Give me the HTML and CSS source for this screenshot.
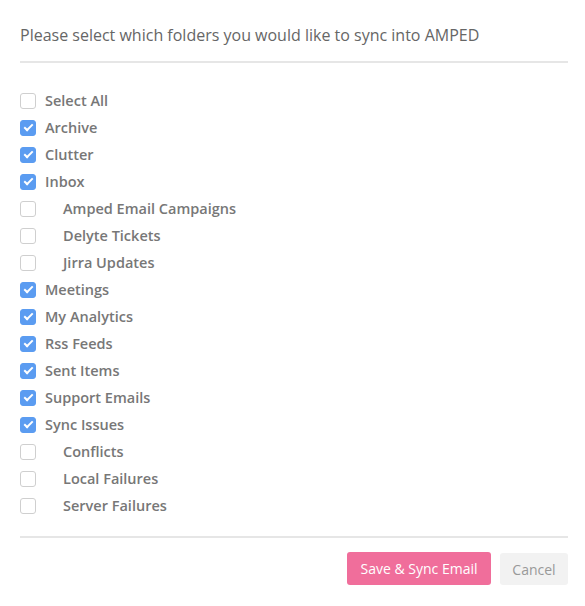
FILE: index.html
```html
<!DOCTYPE html>
<html>
<head>
<meta charset="utf-8">
<link rel="stylesheet" href="styles.css">
</head>
<body>
<div class="dialog">
  <p class="title">Please select which folders you would like to sync into AMPED</p>
  <hr class="rule">
  <ul class="folders">
    <li class="row"><span class="box"></span><span class="label">Select All</span></li>
    <li class="row"><span class="box checked"></span><span class="label">Archive</span></li>
    <li class="row"><span class="box checked"></span><span class="label">Clutter</span></li>
    <li class="row"><span class="box checked"></span><span class="label">Inbox</span></li>
    <li class="row"><span class="box"></span><span class="label sub">Amped Email Campaigns</span></li>
    <li class="row"><span class="box"></span><span class="label sub">Delyte Tickets</span></li>
    <li class="row"><span class="box"></span><span class="label sub">Jirra Updates</span></li>
    <li class="row"><span class="box checked"></span><span class="label">Meetings</span></li>
    <li class="row"><span class="box checked"></span><span class="label">My Analytics</span></li>
    <li class="row"><span class="box checked"></span><span class="label">Rss Feeds</span></li>
    <li class="row"><span class="box checked"></span><span class="label">Sent Items</span></li>
    <li class="row"><span class="box checked"></span><span class="label">Support Emails</span></li>
    <li class="row"><span class="box checked"></span><span class="label">Sync Issues</span></li>
    <li class="row"><span class="box"></span><span class="label sub">Conflicts</span></li>
    <li class="row"><span class="box"></span><span class="label sub">Local Failures</span></li>
    <li class="row"><span class="box"></span><span class="label sub">Server Failures</span></li>
  </ul>
  <hr class="rule">
  <div class="actions">
    <button class="btn primary">Save &amp; Sync Email</button>
    <button class="btn cancel">Cancel</button>
  </div>
</div>
</body>
</html>
```
FILE: styles.css
```css
html, body {
  margin: 0;
  padding: 0;
  background: #fff;
}
.dialog {
  padding: 0 17px 0 20px;
  font-family: "Open Sans", sans-serif;
  color: #666;
}
.title {
  margin: 0;
  padding: 25px 0 16px;
  font-size: 16px;
  line-height: 20px;
  color: #666;
  white-space: nowrap;
}
.rule {
  margin: 0;
  border: 0;
  border-top: 2px solid #e6e6e6;
  height: 0;
}
.folders {
  list-style: none;
  margin: 0;
  padding: 24px 0 17px;
}
.row {
  display: flex;
  align-items: center;
  height: 27px;
}
.box {
  width: 16px;
  height: 16px;
  box-sizing: border-box;
  border: 1px solid #cfcfcf;
  border-radius: 3px;
  background: #fff;
  flex: none;
  position: relative;
}
.box.checked {
  background: #5b9cf1;
  border-color: #5b9cf1;
}
.box.checked::after {
  content: "";
  position: absolute;
  left: 3px;
  top: 3px;
  width: 7px;
  height: 3px;
  border-left: 2.5px solid #fff;
  border-bottom: 2.5px solid #fff;
  transform: rotate(-45deg);
}
.label {
  margin-left: 9px;
  font-size: 14.5px;
  font-weight: 600;
  color: #777;
}
.label.sub {
  margin-left: 27px;
}
.actions {
  display: flex;
  justify-content: flex-end;
  gap: 9px;
  padding-top: 14px;
}
.btn {
  font-family: "Open Sans", sans-serif;
  font-size: 14px;
  border: 0;
  border-radius: 3px;
  height: 33px;
  padding: 0;
}
.primary {
  background: #f06e9b;
  color: #fff;
  width: 144px;
}
.cancel {
  background: #f2f2f2;
  color: #999;
  margin-top: 1px;
  height: 32px;
  width: 68px;
}
```
